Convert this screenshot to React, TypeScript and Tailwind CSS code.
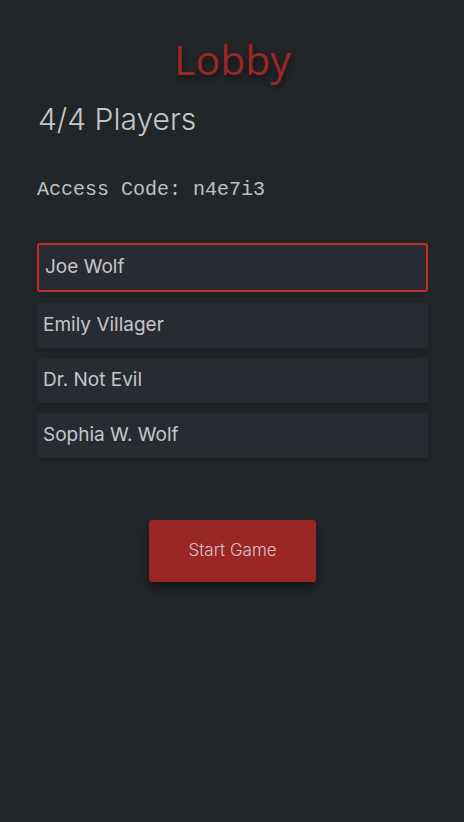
import React from "react";

const players = ["Joe Wolf", "Emily Villager", "Dr. Not Evil", "Sophia W. Wolf"];

export default function App() {
  return (
    <div
      className="min-h-[822px] w-full bg-[#222629] text-[#c5c6c7]"
      style={{ fontFamily: "Inter, 'Noto Sans', sans-serif" }}
    >
      <div className="flex flex-col pl-[37px] pr-[36px] pt-[31px]">
        <h1
          className="text-center text-[41px] leading-[56px] text-[#9b2626] [text-shadow:2px_4px_6px_rgba(0,0,0,0.5)]"
          style={{ fontFamily: "'Open Sans', sans-serif" }}
        >
          Lobby
        </h1>
        <h2 className="mt-[12px] ml-[1px] text-[30px] font-light leading-[40px] text-[#c5c6c7]">4/4 Players</h2>
        <p
          className="mt-[41px] text-[20px] leading-[20px] text-[#bfc0c1]"
          style={{ fontFamily: "'Liberation Mono', monospace" }}
        >
          Access Code: n4e7i3
        </p>
        <div className="mt-[43px] flex flex-col gap-[10px]">
          {players.map((p, i) => (
            <div
              key={p}
              className={
                i === 0
                  ? "mb-[1px] flex h-[49px] items-center rounded-[3px] border-2 border-[#c0302b] bg-[#292b33] pl-[6px] text-[19px] text-[#c5c6c7] shadow-md"
                  : "flex h-[45px] items-center rounded-[3px] bg-[#292b33] pl-[6px] text-[19px] text-[#c5c6c7] shadow-md"
              }
            >
              {p}
            </div>
          ))}
        </div>
        <div className="mt-[62px] flex justify-center">
          <button className="h-[62px] w-[167px] rounded-[3px] bg-[#9b2626] text-[17px] font-light text-[#d5c3c8] shadow-[0_6px_12px_rgba(0,0,0,0.45)]">
            Start Game
          </button>
        </div>
      </div>
    </div>
  );
}
